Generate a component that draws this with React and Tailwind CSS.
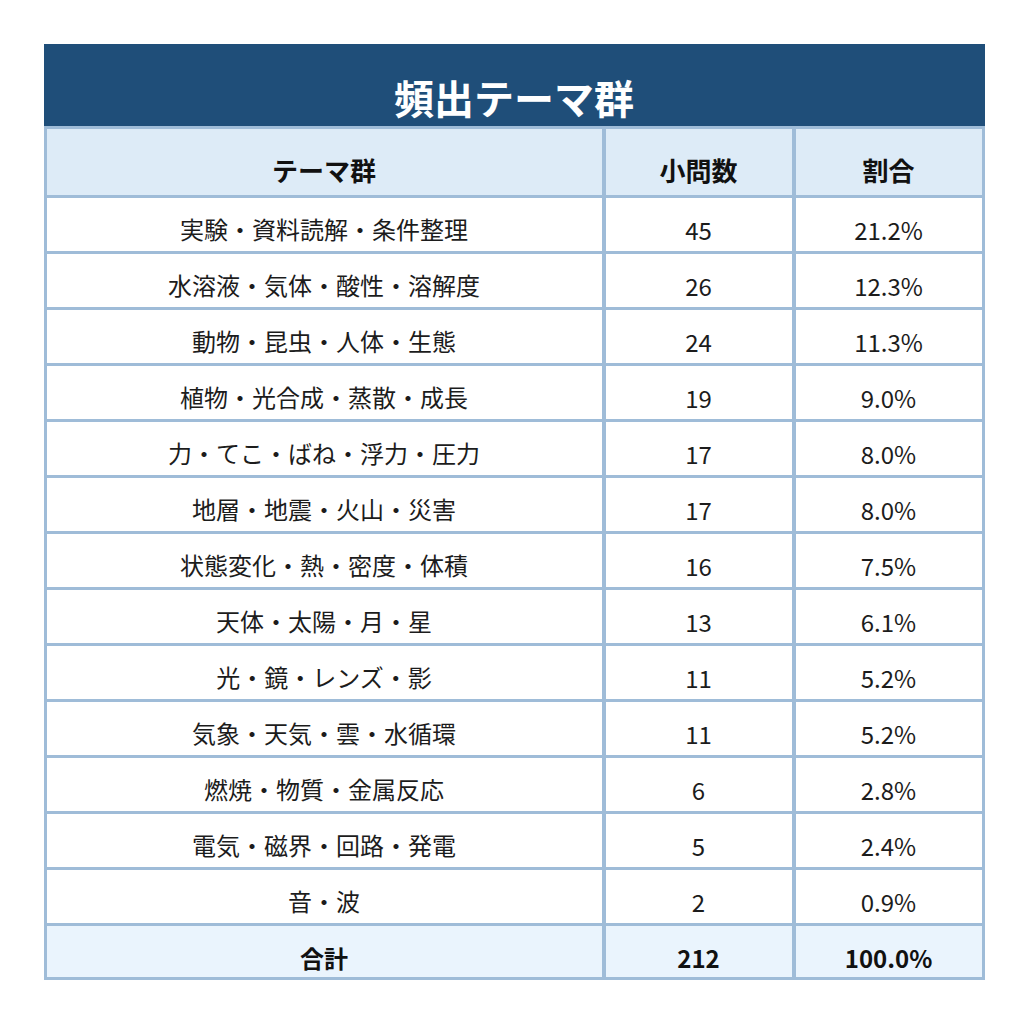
const rows = [
  ["実験・資料読解・条件整理", "45", "21.2%"],
  ["水溶液・気体・酸性・溶解度", "26", "12.3%"],
  ["動物・昆虫・人体・生態", "24", "11.3%"],
  ["植物・光合成・蒸散・成長", "19", "9.0%"],
  ["力・てこ・ばね・浮力・圧力", "17", "8.0%"],
  ["地層・地震・火山・災害", "17", "8.0%"],
  ["状態変化・熱・密度・体積", "16", "7.5%"],
  ["天体・太陽・月・星", "13", "6.1%"],
  ["光・鏡・レンズ・影", "11", "5.2%"],
  ["気象・天気・雲・水循環", "11", "5.2%"],
  ["燃焼・物質・金属反応", "6", "2.8%"],
  ["電気・磁界・回路・発電", "5", "2.4%"],
  ["音・波", "2", "0.9%"],
];

const App = () => {
  return (
    <div className="w-full min-h-[1022px] bg-white pt-[44px] font-['Noto_Sans_CJK_JP',sans-serif] text-[#1c1c1c]">
      <div className="w-[941px] mx-auto">
        {/* Title */}
        <div className="h-[82px] bg-[#1f4e79] flex items-center justify-center pt-[24px] text-white text-[40px] font-bold leading-none">
          頻出テーマ群
        </div>

        {/* Table */}
        <div className="grid grid-cols-[555px_186px_186px] gap-x-[4px] gap-y-[3px] bg-[#9fbcd8] p-[3px]">
          {["テーマ群", "小問数", "割合"].map((h) => (
            <div
              key={h}
              className="h-[66px] bg-[#ddebf7] flex items-center justify-center pt-[16px] text-[26px] font-bold text-[#111] leading-none"
            >
              {h}
            </div>
          ))}

          {rows.map(([theme, count, pct]) => [
            <div key={theme + "a"} className="h-[53px] bg-white flex items-center justify-center pt-[8px] text-[24px] leading-none">
              {theme}
            </div>,
            <div key={theme + "b"} className="h-[53px] bg-white flex items-center justify-center pt-[10px] text-[24px] leading-none">
              {count}
            </div>,
            <div key={theme + "c"} className="h-[53px] bg-white flex items-center justify-center pt-[10px] text-[24px] leading-none">
              {pct}
            </div>,
          ])}

          {["合計", "212", "100.0%"].map((t) => (
            <div
              key={t}
              className="h-[51px] bg-[#eaf4fd] flex items-center justify-center pt-[13px] text-[24px] font-bold text-[#111] leading-none"
            >
              {t}
            </div>
          ))}
        </div>
      </div>
    </div>
  );
};

export default App;
